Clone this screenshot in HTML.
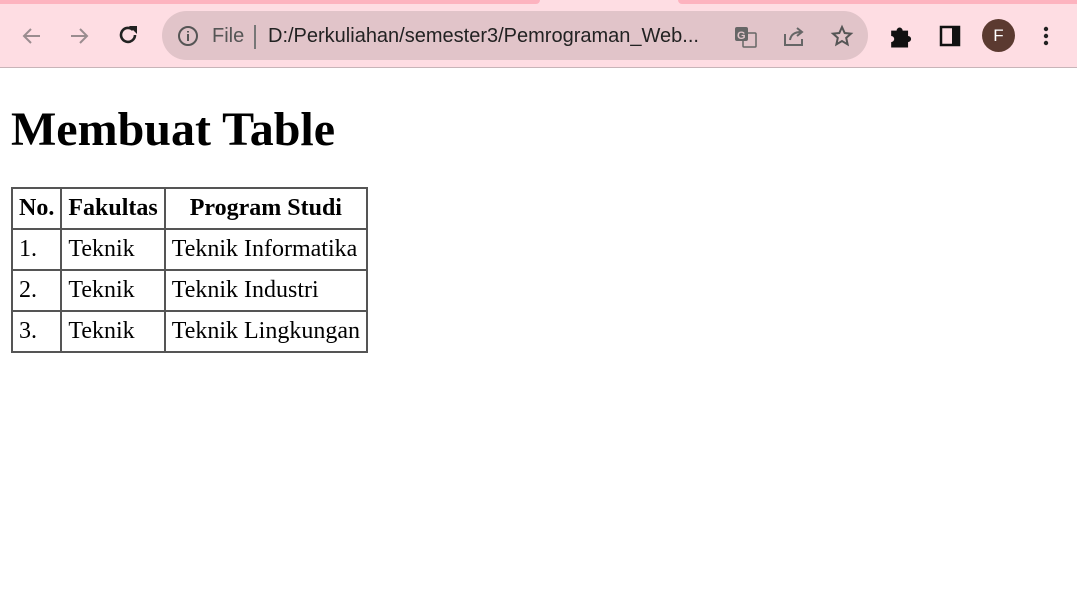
<!DOCTYPE html>
<html><head><style>
body{margin:0;width:1077px;height:597px;overflow:hidden;background:#fff;font-family:"Liberation Serif",serif;}
.top{position:absolute;left:0;top:0;width:1077px;height:67px;background:#fedde3;border-bottom:1px solid #c8b4b8;}
.strip{position:absolute;top:0;height:4px;background:#fdb3bf;}
.omni{position:absolute;left:162px;top:11px;width:706px;height:49px;border-radius:25px;background:#e1c4c9;}
.t{position:absolute;font-family:"Liberation Sans",sans-serif;font-size:20px;color:#3c3c3c;top:25px;}
svg{position:absolute}
h1{position:absolute;left:11px;top:104px;margin:0;font-size:48px;line-height:52px;}
table{position:absolute;left:11px;top:187px;border-collapse:collapse;font-size:24px;}
td,th{border:2px solid #555;padding:0 6px;height:39px;text-align:left;}
th{text-align:center}
</style></head><body>
<div class="top">
<div class="strip" style="left:0;width:540px;border-radius:0 0 8px 0"></div>
<div class="strip" style="left:678px;width:399px;border-radius:0 0 0 8px"></div>
<svg style="left:20px;top:24px" width="24" height="24" viewBox="0 0 24 24"><path d="M20 12H5M11 5l-7 7 7 7" stroke="#9a8c8f" stroke-width="2" fill="none"/></svg>
<svg style="left:67px;top:24px" width="24" height="24" viewBox="0 0 24 24"><path d="M4 12h15M13 5l7 7-7 7" stroke="#9a8c8f" stroke-width="2" fill="none"/></svg>
<svg style="left:116px;top:23px" width="24" height="24" viewBox="0 0 24 24"><path d="M19 12a7 7 0 1 1-2-5" stroke="#222" stroke-width="2.6" fill="none"/><path d="M13 3h8v8z" fill="#222"/></svg>
<div class="omni"></div>
<svg style="left:177px;top:25px" width="22" height="22" viewBox="0 0 22 22"><circle cx="11" cy="11" r="9" stroke="#555" stroke-width="2" fill="none"/><path d="M11 9v7M11 6v1.5" stroke="#555" stroke-width="2"/></svg>
<div class="t" style="left:212px;color:#555">File</div>
<div style="position:absolute;left:254px;top:25px;width:2px;height:24px;background:#777"></div>
<div class="t" style="left:268px;color:#222">D:/Perkuliahan/semester3/Pemrograman_Web...</div>
<svg style="left:734px;top:25px" width="24" height="24" viewBox="0 0 24 24"><rect x="1" y="2" width="13" height="14" rx="2" fill="#666"/><rect x="9" y="8" width="13" height="14" rx="1" fill="none" stroke="#666" stroke-width="1.5"/><text x="3" y="14" font-size="11" font-family="Liberation Sans" font-weight="bold" fill="#e1c4c9">G</text></svg>
<svg style="left:782px;top:24px" width="24" height="24" viewBox="0 0 24 24"><path d="M3 10v11h17v-6" stroke="#666" stroke-width="2" fill="none"/><path d="M8 16c1-6 5-8 11-8M15 4l5 4-5 4" stroke="#666" stroke-width="2" fill="none"/></svg>
<svg style="left:830px;top:24px" width="24" height="24" viewBox="0 0 24 24"><path d="M12 3l2.7 6 6.3.6-4.8 4.3 1.4 6.4L12 17l-5.6 3.3 1.4-6.4L3 9.6 9.3 9z" stroke="#555" stroke-width="2" fill="none"/></svg>
<svg style="left:889px;top:23px" width="26" height="26" viewBox="0 0 24 24"><path d="M2 7h5a2.8 2.8 0 0 1 5.6 0h5v5a2.8 2.8 0 0 1 0 5.6v5H2v-5a2.8 2.8 0 0 0 0-5.6z" fill="#111"/></svg>
<svg style="left:938px;top:24px" width="24" height="24" viewBox="0 0 24 24"><rect x="3" y="3" width="18" height="18" fill="none" stroke="#111" stroke-width="2.5"/><rect x="14" y="3" width="7" height="18" fill="#111"/></svg>
<div style="position:absolute;left:982px;top:19px;width:33px;height:33px;border-radius:50%;background:#5b3a30;color:#fff;font:17px 'Liberation Sans',sans-serif;text-align:center;line-height:33px">F</div>
<svg style="left:1034px;top:24px" width="24" height="24" viewBox="0 0 24 24"><circle cx="12" cy="5" r="2.2" fill="#222"/><circle cx="12" cy="12" r="2.2" fill="#222"/><circle cx="12" cy="19" r="2.2" fill="#222"/></svg>
</div>
<h1>Membuat Table</h1>
<table>
<tr><th>No.</th><th>Fakultas</th><th>Program Studi</th></tr>
<tr><td>1.</td><td>Teknik</td><td>Teknik Informatika</td></tr>
<tr><td>2.</td><td>Teknik</td><td>Teknik Industri</td></tr>
<tr><td>3.</td><td>Teknik</td><td>Teknik Lingkungan</td></tr>
</table>
</body></html>
